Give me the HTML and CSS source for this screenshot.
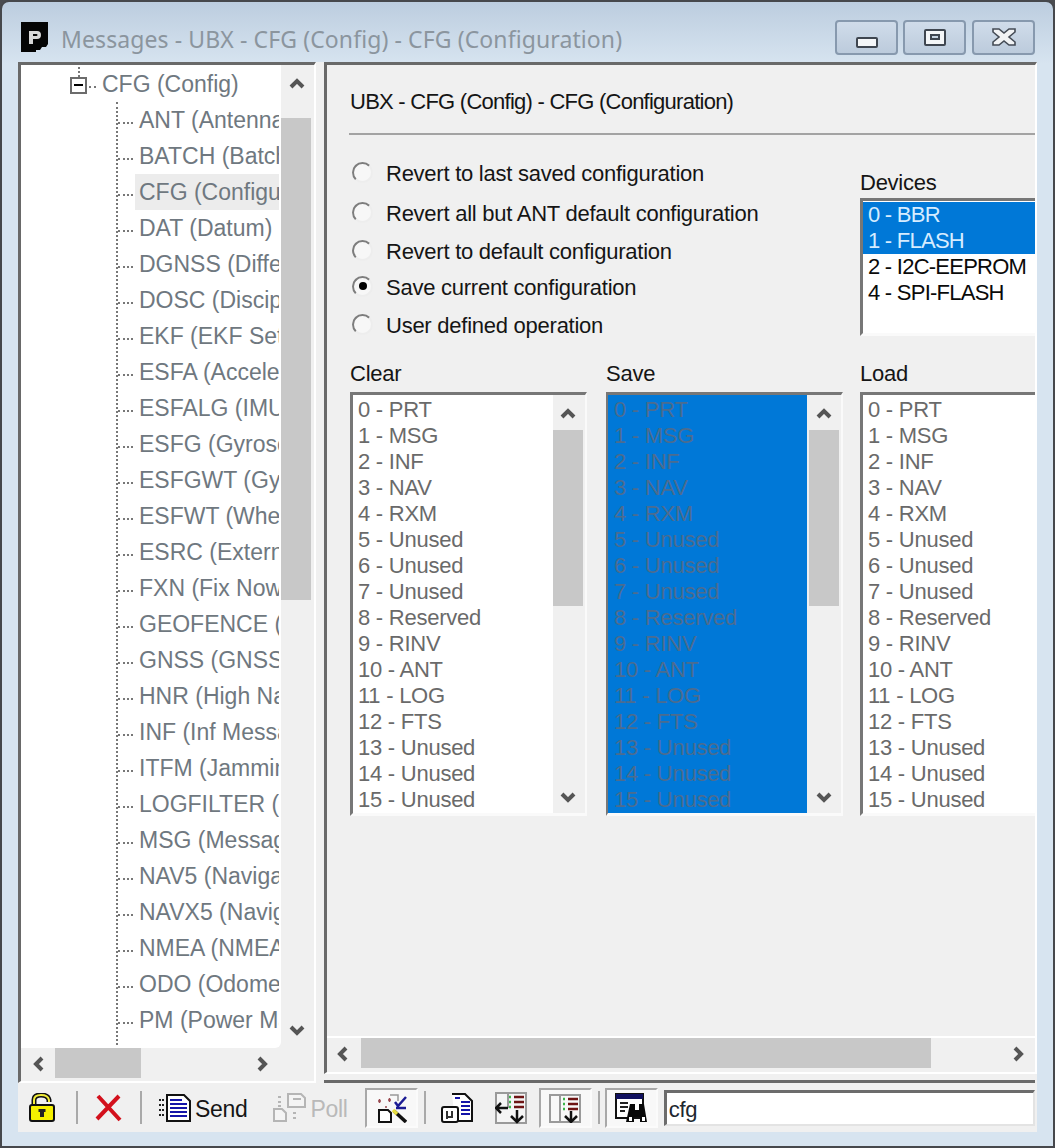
FILE: index.html
```html
<!DOCTYPE html>
<html lang="en">
<head>
<meta charset="utf-8">
<title>Messages - UBX - CFG (Config) - CFG (Configuration)</title>
<link rel="stylesheet" href="styles.css">
</head>
<body>
<div class="window">
  <header class="titlebar">
    <svg class="app-icon" width="27" height="30" viewBox="0 0 27 30"><path d="M0 0H27V22L25 25H21L19 28H15V30H0Z" fill="#050505"/><path d="M8 9H16Q20 9 20 13Q20 17 16 17H12V22H8ZM12 12V14H15.500Q16.500 14 16.500 13Q16.500 12 15.500 12Z" fill="#d8d8d8" fill-rule="evenodd"/></svg>
    <span class="title-text">Messages - UBX - CFG (Config) - CFG (Configuration)</span>
    <div class="win-buttons">
      <button class="win-btn"><svg width="22" height="11" viewBox="0 0 22 11"><rect x="1" y="1" width="20" height="9" rx="1" fill="#f4f6f8" stroke="#3f4650" stroke-width="2"/></svg></button>
      <button class="win-btn win-btn-max"><svg width="22" height="17" viewBox="0 0 22 17"><rect x="1" y="1" width="20" height="15" rx="1" fill="#f4f6f8" stroke="#3f4650" stroke-width="2"/><rect x="7" y="6" width="8" height="4" fill="#c6d3e1" stroke="#3f4650" stroke-width="2"/></svg></button>
      <button class="win-btn win-btn-close"><svg width="24" height="18" viewBox="0 0 24 18"><path d="M1 1H7L12 5L17 1H23V4L17 9L23 14V17H17L12 13L7 17H1V14L7 9L1 4Z" fill="#f1f3f5" stroke="#444b55" stroke-width="1.600"/></svg></button>
    </div>
  </header>

  <div class="client">
    <div class="panes">
      <aside class="left-pane">
        <div class="tree-row">
          <nav class="tree">
            <div class="tree-root"><span class="toggle"><span class="toggle-minus"></span></span><span class="root-dots"></span><span class="root-label">CFG (Config)</span></div>
            <ul class="tree-list">
              <li class="node"><span class="dots"></span><span class="node-label">ANT (Antenna</span></li>
              <li class="node"><span class="dots"></span><span class="node-label">BATCH (Batch</span></li>
              <li class="node node-current"><span class="dots"></span><span class="node-label">CFG (Configur</span></li>
              <li class="node"><span class="dots"></span><span class="node-label">DAT (Datum)</span></li>
              <li class="node"><span class="dots"></span><span class="node-label">DGNSS (Differ</span></li>
              <li class="node"><span class="dots"></span><span class="node-label">DOSC (Discipl</span></li>
              <li class="node"><span class="dots"></span><span class="node-label">EKF (EKF Settin</span></li>
              <li class="node"><span class="dots"></span><span class="node-label">ESFA (Accelero</span></li>
              <li class="node"><span class="dots"></span><span class="node-label">ESFALG (IMU</span></li>
              <li class="node"><span class="dots"></span><span class="node-label">ESFG (Gyrosc</span></li>
              <li class="node"><span class="dots"></span><span class="node-label">ESFGWT (Gyro</span></li>
              <li class="node"><span class="dots"></span><span class="node-label">ESFWT (Wheel</span></li>
              <li class="node"><span class="dots"></span><span class="node-label">ESRC (External</span></li>
              <li class="node"><span class="dots"></span><span class="node-label">FXN (Fix Now</span></li>
              <li class="node"><span class="dots"></span><span class="node-label">GEOFENCE (Ge</span></li>
              <li class="node"><span class="dots"></span><span class="node-label">GNSS (GNSS C</span></li>
              <li class="node"><span class="dots"></span><span class="node-label">HNR (High Nav</span></li>
              <li class="node"><span class="dots"></span><span class="node-label">INF (Inf Messag</span></li>
              <li class="node"><span class="dots"></span><span class="node-label">ITFM (Jamming</span></li>
              <li class="node"><span class="dots"></span><span class="node-label">LOGFILTER (Lo</span></li>
              <li class="node"><span class="dots"></span><span class="node-label">MSG (Message</span></li>
              <li class="node"><span class="dots"></span><span class="node-label">NAV5 (Navigat</span></li>
              <li class="node"><span class="dots"></span><span class="node-label">NAVX5 (Navig</span></li>
              <li class="node"><span class="dots"></span><span class="node-label">NMEA (NMEA</span></li>
              <li class="node"><span class="dots"></span><span class="node-label">ODO (Odomet</span></li>
              <li class="node"><span class="dots"></span><span class="node-label">PM (Power Ma</span></li>
            </ul>
          </nav>
          <div class="vscroll vscroll-tree">
            <span class="sb-arrow"><svg width="16" height="11" viewBox="0 0 16 11"><path d="M2 9L8 3L14 9" class="chev"/></svg></span>
            <span class="sb-thumb"></span>
            <span class="sb-arrow sb-arrow-end"><svg width="16" height="11" viewBox="0 0 16 11"><path d="M2 2L8 8L14 2" class="chev"/></svg></span>
          </div>
        </div>
        <div class="hscroll hscroll-tree">
          <span class="sb-harrow"><svg width="11" height="16" viewBox="0 0 11 16"><path d="M9 2L3 8L9 14" class="chev"/></svg></span>
          <span class="sb-hthumb"></span>
          <span class="sb-harrow sb-harrow-end"><svg width="11" height="16" viewBox="0 0 11 16"><path d="M2 2L8 8L2 14" class="chev"/></svg></span>
        </div>
      </aside>

      <div class="right-col">
        <main class="right-pane">
          <div class="content">
            <h1 class="panel-title">UBX - CFG (Config) - CFG (Configuration)</h1>
            <div class="panel-rule"></div>
            <section class="top-section">
              <div class="radios">
                <label class="radio"><span class="radio-dot"></span>Revert to last saved configuration</label>
                <label class="radio radio-2"><span class="radio-dot"></span>Revert all but ANT default configuration</label>
                <label class="radio radio-3"><span class="radio-dot"></span>Revert to default configuration</label>
                <label class="radio radio-4"><span class="radio-dot radio-on"></span>Save current configuration</label>
                <label class="radio radio-5"><span class="radio-dot"></span>User defined operation</label>
              </div>
              <div class="devices">
                <div class="field-label">Devices</div>
                <ul class="box device-box">
                  <li class="item item-sel">0 - BBR</li>
                  <li class="item item-sel">1 - FLASH</li>
                  <li class="item">2 - I2C-EEPROM</li>
                  <li class="item">4 - SPI-FLASH</li>
                </ul>
              </div>
            </section>
            <section class="lists">
              <div class="list-col col-clear">
                <div class="field-label">Clear</div>
                <div class="box list-box">
                  <ul class="items">
                    <li class="item">0 - PRT</li><li class="item">1 - MSG</li><li class="item">2 - INF</li><li class="item">3 - NAV</li><li class="item">4 - RXM</li><li class="item">5 - Unused</li><li class="item">6 - Unused</li><li class="item">7 - Unused</li><li class="item">8 - Reserved</li><li class="item">9 - RINV</li><li class="item">10 - ANT</li><li class="item">11 - LOG</li><li class="item">12 - FTS</li><li class="item">13 - Unused</li><li class="item">14 - Unused</li><li class="item">15 - Unused</li>
                  </ul>
                  <div class="vscroll vscroll-list">
                    <span class="sb-arrow"><svg width="16" height="11" viewBox="0 0 16 11"><path d="M2 9L8 3L14 9" class="chev"/></svg></span>
                    <span class="sb-thumb"></span>
                    <span class="sb-arrow sb-arrow-end"><svg width="16" height="11" viewBox="0 0 16 11"><path d="M2 2L8 8L14 2" class="chev"/></svg></span>
                  </div>
                </div>
              </div>
              <div class="list-col col-save">
                <div class="field-label">Save</div>
                <div class="box list-box">
                  <ul class="items items-sel">
                    <li class="item">0 - PRT</li><li class="item">1 - MSG</li><li class="item">2 - INF</li><li class="item">3 - NAV</li><li class="item">4 - RXM</li><li class="item">5 - Unused</li><li class="item">6 - Unused</li><li class="item">7 - Unused</li><li class="item">8 - Reserved</li><li class="item">9 - RINV</li><li class="item">10 - ANT</li><li class="item">11 - LOG</li><li class="item">12 - FTS</li><li class="item">13 - Unused</li><li class="item">14 - Unused</li><li class="item">15 - Unused</li>
                  </ul>
                  <div class="vscroll vscroll-list">
                    <span class="sb-arrow"><svg width="16" height="11" viewBox="0 0 16 11"><path d="M2 9L8 3L14 9" class="chev"/></svg></span>
                    <span class="sb-thumb"></span>
                    <span class="sb-arrow sb-arrow-end"><svg width="16" height="11" viewBox="0 0 16 11"><path d="M2 2L8 8L14 2" class="chev"/></svg></span>
                  </div>
                </div>
              </div>
              <div class="list-col col-load">
                <div class="field-label">Load</div>
                <div class="box list-box">
                  <ul class="items">
                    <li class="item">0 - PRT</li><li class="item">1 - MSG</li><li class="item">2 - INF</li><li class="item">3 - NAV</li><li class="item">4 - RXM</li><li class="item">5 - Unused</li><li class="item">6 - Unused</li><li class="item">7 - Unused</li><li class="item">8 - Reserved</li><li class="item">9 - RINV</li><li class="item">10 - ANT</li><li class="item">11 - LOG</li><li class="item">12 - FTS</li><li class="item">13 - Unused</li><li class="item">14 - Unused</li><li class="item">15 - Unused</li>
                  </ul>
                </div>
              </div>
            </section>
          </div>
          <div class="hscroll hscroll-main">
            <span class="sb-harrow"><svg width="11" height="16" viewBox="0 0 11 16"><path d="M9 2L3 8L9 14" class="chev"/></svg></span>
            <span class="sb-hthumb"></span>
            <span class="sb-harrow sb-harrow-end"><svg width="11" height="16" viewBox="0 0 11 16"><path d="M2 2L8 8L2 14" class="chev"/></svg></span>
          </div>
        </main>
        <div class="toolbar-rule"></div>
      </div>
    </div>

    <footer class="toolbar">
      <svg class="tool tool-lock" width="28" height="30" viewBox="0 0 28 30"><path d="M6 12V7Q6 2 13 2Q20 2 21 7V9" fill="none" stroke="#111" stroke-width="5"/><path d="M6 12V7Q6 2 13 2Q20 2 21 7V9" fill="none" stroke="#f2ee3a" stroke-width="2"/><rect x="2" y="12" width="24" height="16" rx="2" fill="#f5f000" stroke="#111" stroke-width="2"/><rect x="12" y="17" width="4" height="7" fill="#222"/><rect x="10.500" y="16" width="7" height="3" fill="#222"/></svg>
      <span class="tool-sep sep-1"></span>
      <svg class="tool tool-x" width="28" height="28" viewBox="0 0 28 28"><path d="M4 2L26 26M25 2L3 25" stroke="#d3101c" stroke-width="4" fill="none"/></svg>
      <span class="tool-sep sep-2"></span>
      <svg class="tool tool-send" width="34" height="28" viewBox="0 0 34 28"><path d="M1 6H7M1 11H7M1 16H7M1 21H7" stroke="#222" stroke-width="2" stroke-dasharray="2 1"/><path d="M9 1H26L32 7V27H9Z" fill="#fff" stroke="#111" stroke-width="2"/><path d="M12 6H24M12 10H29M12 14H29M12 18H29M12 22H29" stroke="#1414a8" stroke-width="2"/></svg>
      <span class="tool-text">Send</span>
      <svg class="tool tool-poll" width="33" height="30" viewBox="0 0 33 30"><path d="M5 5H8M5 10H8M5 14H8M20 21H23M20 26H23" stroke="#b5b5b5" stroke-width="2"/><path d="M15 2H28L32 6V15H15ZM20 7H28" fill="#f4f4f4" stroke="#b5b5b5" stroke-width="2"/><path d="M1 17H9L13 21V29H1Z" fill="#f4f4f4" stroke="#b5b5b5" stroke-width="2"/></svg>
      <span class="tool-text tool-text-off">Poll</span>
      <span class="toggle-btn tb-wizard"><svg width="31" height="30" viewBox="0 0 31 30"><path d="M2 8H5M3.500 6V10M12 7H15M13.500 5V9M9 14H11" stroke="#9a4a50" stroke-width="1.500"/><path d="M14 2H22V8" fill="none" stroke="#999" stroke-width="1.500"/><path d="M19 9L22 13L30 4M20 15H30" fill="none" stroke="#1c1c94" stroke-width="2.500"/><path d="M3 17H12L15 20V29H3Z" fill="#fff" stroke="#111" stroke-width="2"/><path d="M18 18L30 29" stroke="#111" stroke-width="3.500"/><path d="M17 17L21 21" stroke="#e8df40" stroke-width="3.500"/></svg></span>
      <span class="tool-sep sep-3"></span>
      <svg class="tool tool-doc" width="32" height="30" viewBox="0 0 32 30"><path d="M11 1H24L31 8V28H14" fill="#fff" stroke="#111" stroke-width="2"/><path d="M14 5H19M20 9H29M20 13H29M20 17H29M20 21H29" stroke="#1414a8" stroke-width="2"/><rect x="1" y="14" width="16" height="15" rx="2" fill="#fff" stroke="#111" stroke-width="2"/><path d="M6 18V26M6 24H11V18" fill="none" stroke="#333" stroke-width="2"/></svg>
      <svg class="tool tool-split" width="32" height="32" viewBox="0 0 32 32"><path d="M1 1H31V31H1Z" fill="#f5f5f5" stroke="#9a9a9a" stroke-width="2"/><path d="M13 1V16" stroke="#9a9a9a" stroke-width="2"/><path d="M14 5H16M14 10H16M14 15H16" stroke="#3bb54a" stroke-width="2.500"/><path d="M19 5H29M19 10H29M19 15H29" stroke="#6e1414" stroke-width="2.500"/><path d="M13 16H1M6 11L1 16L6 21" fill="none" stroke="#111" stroke-width="2.500"/><path d="M22 18V30M16 24L22 30L28 24" fill="none" stroke="#111" stroke-width="2.500"/></svg>
      <span class="toggle-btn tb-list"><svg width="32" height="30" viewBox="0 0 32 30"><path d="M1 2H31V29H1ZM11 2V29" fill="none" stroke="#9a9a9a" stroke-width="2"/><path d="M14 6H16M14 11H16M14 16H16" stroke="#3bb54a" stroke-width="2.500"/><path d="M19 6H29M19 11H29M19 16H29" stroke="#6e1414" stroke-width="2.500"/><path d="M22 18V29M16 23L22 29L28 23" fill="none" stroke="#111" stroke-width="2.500"/></svg></span>
      <span class="tool-sep sep-4"></span>
      <span class="toggle-btn tb-find"><svg width="32" height="30" viewBox="0 0 32 30"><rect x="1" y="1" width="27" height="24" fill="#fff" stroke="#111" stroke-width="2"/><rect x="1" y="1" width="27" height="5" fill="#10105e"/><path d="M5 10H13M5 14H13M5 18H10" stroke="#222" stroke-width="2"/><path d="M15 11H20V17H24V11H29L32 29H25V24H19V29H11Z" fill="#080808"/><path d="M14 24H17V28H14ZM27 24H30V28H27Z" fill="#fff"/></svg></span>
      <input class="search" type="text" value="cfg" aria-label="Filter">
    </footer>
  </div>
</div>
</body>
</html>
```
FILE: styles.css
```css
* { box-sizing: border-box; }
html, body { margin: 0; padding: 0; background: #4a4c50; }
body { width: 1055px; height: 1148px; overflow: hidden; font-family: "Liberation Sans", Arial, sans-serif; font-size: 22px; letter-spacing: -0.25px; color: #151515; }
ul { list-style: none; margin: 0; padding: 0; }

.window { width: 1055px; height: 1148px; display: flex; flex-direction: column; border: 2px solid #46484c; border-radius: 9px 9px 0 0; background: linear-gradient(#bccddf 0, #d7e4f0 62px, #d7e4f0 100%); }

.titlebar { height: 60px; display: flex; align-items: flex-start; padding-left: 19px; }
.app-icon { margin-top: 20px; flex: none; }
.title-text { margin-left: 13px; margin-top: 21px; line-height: 32px; font-family: "Noto Sans", sans-serif; font-size: 23px; letter-spacing: 0.1px; color: #8b959e; white-space: nowrap; }
.win-buttons { margin-left: auto; margin-right: 18px; margin-top: 18px; display: flex; gap: 5px; }
.win-btn { width: 63px; height: 35px; padding: 0; display: flex; align-items: center; justify-content: center; border: 2px solid #8799ae; border-radius: 4px; background: linear-gradient(#d0dcea, #bccbdc); }
.win-btn svg { display: block; margin-top: 9px; }
.win-btn-max svg { margin-top: 0; }
.win-btn-close svg { margin-top: -1px; }
.win-btn-close { margin-left: 1px; }

.client { flex: 1; margin: 0 16px 14px; background: #f0f0f0; display: flex; flex-direction: column; min-height: 0; }
.panes { display: flex; height: 1021px; flex: none; }

.left-pane { width: 298px; flex: none; display: flex; flex-direction: column; border-style: solid; border-width: 3px 2px 2px 3px; border-color: #696969 #fff #fff #696969; }
.tree-row { flex: 1; display: flex; min-height: 0; }
.tree { width: 260px; flex: none; background: #fff; overflow: hidden; display: flex; flex-direction: column; padding-top: 1px; padding-bottom: 3px; border-bottom-right-radius: 6px; font-size: 23px; letter-spacing: 0; }

.tree-root { height: 36px; flex: none; display: flex; align-items: center; padding-left: 49px; color: #6f7880; position: relative; }
.toggle { width: 17px; height: 17px; border: 2px solid #6c6c6c; background: #fff; display: flex; align-items: center; justify-content: center; margin-top: 2px; flex: none; position: relative; }
.toggle::before { content: ""; position: absolute; left: 6px; bottom: 15px; height: 14px; border-left: 2px dotted #777; }
.toggle-minus { width: 9px; height: 2px; background: #000; }
.root-dots { width: 7px; margin-left: 2px; margin-top: 6px; border-top: 2px dotted #777; }
.root-label { margin-left: 6px; white-space: nowrap; }

.tree-list { flex: 1; margin-left: 95px; width: 163px; border-left: 2px dotted #777; }
.node { height: 36px; display: flex; align-items: center; }
.dots { width: 15px; flex: none; margin-top: 6px; border-top: 2px dotted #777; }
.node-label { flex: 1; min-width: 0; height: 36px; line-height: 37px; margin-left: 2px; padding-left: 4px; white-space: nowrap; overflow: hidden; color: #6f7880; }
.node-current .node-label { background: #ececec; }

.vscroll { display: flex; flex-direction: column; background: #f0f0f0; flex: none; }
.vscroll-tree { width: 33px; }
.vscroll-tree .sb-arrow { height: 53px; padding-top: 13px; }
.vscroll-tree .sb-thumb { height: 482px; }
.vscroll-tree .sb-arrow-end { padding-top: 0; padding-bottom: 12px; align-items: flex-end; flex: 1; }
.vscroll-list { width: 32px; }
.vscroll-list .sb-arrow { height: 35px; padding-top: 13px; }
.vscroll-list .sb-thumb { height: 176px; }
.vscroll-list .sb-arrow-end { flex: 1; padding-top: 0; padding-bottom: 10px; align-items: flex-end; }
.sb-arrow { display: flex; justify-content: center; padding-right: 2px; flex: none; align-items: flex-start; }
.sb-arrow svg, .sb-harrow svg { display: block; }
.sb-thumb { width: 30px; background: #c8c8c8; display: block; flex: none; }
.chev { fill: none; stroke: #555; stroke-width: 4; }

.hscroll { display: flex; align-items: flex-start; background: #f0f0f0; flex: none; }
.hscroll-tree { height: 33px; width: 260px; }
.hscroll-tree .sb-harrow { width: 34px; padding-top: 8px; }
.hscroll-tree .sb-hthumb { width: 86px; }
.hscroll-tree .sb-harrow-end { flex: 1; padding-left: 116px; justify-content: flex-start; width: auto; }
.hscroll-main { height: 34px; }
.hscroll-main .sb-harrow { width: 34px; padding-top: 8px; padding-right: 4px; }
.hscroll-main .sb-hthumb { width: 570px; }
.hscroll-main .sb-harrow-end { flex: 1; padding-left: 82px; padding-right: 0; justify-content: flex-start; }
.sb-harrow { display: flex; justify-content: center; flex: none; }
.sb-hthumb { height: 30px; background: #c8c8c8; display: block; flex: none; }

.right-col { margin-left: 8px; flex: 1; min-width: 0; display: flex; flex-direction: column; }
.right-pane { height: 1012px; flex: none; display: flex; flex-direction: column; border-style: solid; border-width: 3px 2px 2px 3px; border-color: #696969 #fff #fff #696969; background: #f0f0f0; overflow: hidden; }
.toolbar-rule { height: 3px; margin-top: 6px; margin-right: 2px; background: #696969; flex: none; }

.content { flex: 1; min-height: 0; padding-left: 23px; overflow: hidden; border-bottom: 2px solid #fff; }
.panel-title { margin: 0; height: 68px; padding-top: 24px; line-height: 26px; font-size: 22px; font-weight: 400; letter-spacing: -0.75px; white-space: nowrap; }
.panel-rule { height: 2px; background: #a3a3a3; margin-left: -1px; }

.top-section { height: 226px; display: flex; }
.radios { width: 510px; flex: none; padding-top: 27px; }
.radio { height: 24px; display: flex; align-items: center; white-space: nowrap; line-height: 24px; }
.radio-2 { margin-top: 16px; }
.radio-3 { margin-top: 14px; }
.radio-4 { margin-top: 12px; }
.radio-5 { margin-top: 14px; }
.radio-dot { width: 21px; height: 21px; margin-left: 2px; margin-right: 13px; margin-top: -4px; flex: none; display: flex; align-items: center; justify-content: center; border-radius: 50%; border: 2px solid; border-color: #7d7d7d #ededed #ededed #7d7d7d; background: #f7f7f7; }
.radio-on::after { content: ""; width: 8px; height: 8px; border-radius: 50%; background: #000; }

.devices { padding-top: 35px; width: 175px; flex: none; }
.field-label { height: 24px; line-height: 26px; white-space: nowrap; }

.box { display: block; border-style: solid; border-width: 3px 2px 3px 3px; border-color: #777 #fafafa #fafafa #777; background: #fff; }
.item { height: 26px; line-height: 25px; padding-left: 5px; white-space: nowrap; color: #6a6a6a; }
.device-box { margin-top: 4px; height: 138px; padding-top: 1px; border-right-width: 0; }
.device-box .item { color: #0a0a0a; letter-spacing: -0.75px; }
.device-box .item-sel { background: #0078d7; color: #d6ecff; }

.lists { display: flex; }
.list-col { flex: none; }
.col-clear { width: 237px; }
.col-save { width: 237px; margin-left: 19px; }
.col-load { width: 175px; margin-left: 17px; }
.list-box { margin-top: 7px; height: 424px; display: flex; background: #fff; }
.items { width: 200px; flex: none; padding-top: 2px; }
.items-sel { background: #0078d7; width: 199px; }
.items-sel .item { color: #4c6c8f; padding-left: 6px; }
.col-save .list-box { border-left-width: 2px; }
.col-save .vscroll-list { padding-left: 2px; width: 34px; }
.col-load .list-box { border-right-width: 0; }
.col-load .items { width: 100%; }

.toolbar { flex: 1; min-height: 0; display: flex; align-items: center; }
.tool { display: block; flex: none; }
.tool-sep { width: 2px; height: 33px; background: #a9a9a9; flex: none; }
.tool-lock { margin-left: 10px; }
.sep-1 { margin-left: 20px; }
.tool-x { margin-left: 16px; }
.sep-2 { margin-left: 18px; }
.tool-send { margin-left: 16px; }
.tool-text { font-size: 23px; margin-left: 3px; margin-top: 2px; line-height: 30px; letter-spacing: -0.3px; }
.tool-poll { margin-left: 25px; margin-top: -2px; }
.tool-text-off { color: #b9b9b9; margin-left: 5px; }
.toggle-btn { width: 53px; height: 40px; display: flex; align-items: center; justify-content: center; flex: none; border-style: solid; border-width: 2px; border-color: #a8a8a8 #fbfbfb #fbfbfb #a8a8a8; background: #f8f8f8; }
.tb-wizard { margin-left: 17px; }
.sep-3 { margin-left: 6px; }
.tool-doc { margin-left: 15px; }
.tool-split { margin-left: 22px; }
.tb-list { margin-left: 12px; }
.sep-4 { margin-left: 6px; }
.tb-find { margin-left: 5px; }
.search { margin-left: 6px; width: 371px; height: 36px; padding: 4px 0 0 2px; border-style: solid; border-width: 3px 2px 2px 3px; border-color: #6c6c6c #e3e3e3 #e3e3e3 #6c6c6c; background: #fff; font-family: "Liberation Sans", Arial, sans-serif; font-size: 22px; letter-spacing: -0.25px; color: #20262e; outline: none; }
```
